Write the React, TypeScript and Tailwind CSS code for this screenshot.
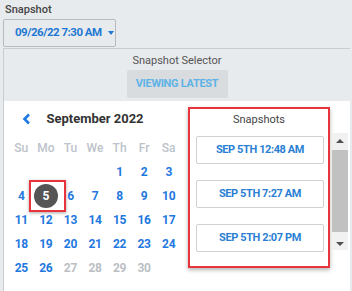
import { useState } from "react";

const weekdays = ["Su", "Mo", "Tu", "We", "Th", "Fr", "Sa"];
const snapshots = ["SEP 5TH 12:48 AM", "SEP 5TH 7:27 AM", "SEP 5TH 2:07 PM"];

// september 2022 starts on a thursday
const days: (number | null)[] = [null, null, null, null, ...Array.from({ length: 30 }, (_, i) => i + 1)];

export default function App() {
  const [selected, setSelected] = useState(5);

  return (
    <div className="w-[352px] h-[291px] bg-[#e8ebee] overflow-hidden font-['Roboto',sans-serif] text-[#333]">
      <div className="pl-[5px] pt-[3px] text-[11px] leading-[14px] font-medium text-[#444]">Snapshot</div>

      <button className="ml-[3px] mt-[2px] h-[28px] w-[113px] border border-[#b6bbc0] rounded-[2px] bg-[#e8ebee] flex items-center pl-[11px] gap-[6px] whitespace-nowrap text-[11.5px] tracking-[-0.5px] font-bold text-[#1f78d1]">
        <span>09/26/22 7:30 AM</span>
        <span className="w-0 h-0 border-l-[3.5px] border-r-[3.5px] border-t-[4px] border-l-transparent border-r-transparent border-t-[#1f78d1]" />
      </button>

      {/* POPUP */}
      <div className="ml-[3px] mr-[2px] mt-[1px] border-t border-l border-[#c9cdd1]">
        <div className="h-[52px] flex flex-col items-center pt-[5px]">
          <span className="text-[11px] leading-[14px] text-[#555]">Snapshot Selector</span>
          <div className="mt-[2px] h-[28px] w-[101px] bg-[#d8dcdf] rounded-[2px] flex items-center justify-center text-[11px] tracking-[-0.3px] font-bold text-[#5db3e6]">
            VIEWING LATEST
          </div>
        </div>

        <div className="bg-white h-[200px] flex items-start">
          {/* CALENDAR */}
          <div className="pl-[5px] pt-[9px] w-[177px]">
            <div className="relative h-[18px] flex items-center justify-center">
              <svg className="absolute left-[13px] top-[3px]" width="9" height="12" viewBox="0 0 9 12">
                <path d="M7 1.5 L2.5 6 L7 10.5" fill="none" stroke="#1f78e0" strokeWidth="2.6" />
              </svg>
              <span className="text-[13px] font-bold text-[#333]">September 2022</span>
            </div>
            <div className="mt-[8px] grid grid-cols-7 w-[172px]">
              {weekdays.map((d) => (
                <div key={d} className="h-[24px] flex items-center justify-center text-[12px] font-medium text-[#bcc3ca]">
                  {d}
                </div>
              ))}
              {days.map((d, idx) => (
                <div key={idx} className="relative h-[24px] flex items-center justify-center">
                  {d !== null && (
                    <button
                      onClick={() => setSelected(d)}
                      className={`w-[24px] h-[24px] rounded-full flex items-center justify-center text-[12px] tracking-[-0.3px] font-bold ${
                        d === selected ? "bg-[#555] text-white" : d > 26 ? "text-[#bbbfc4]" : "text-[#1f78e0]"
                      }`}
                    >
                      {d}
                    </button>
                  )}
                  {d === 5 && (
                    <div className="absolute left-[-5px] top-[-4px] w-[37px] h-[32px] border-2 border-[#e8343c] shadow-[0_1px_3px_rgba(0,0,0,0.35)]" />
                  )}
                </div>
              ))}
            </div>
          </div>

          {/* SNAPSHOT LIST */}
          <div className="ml-[7px] mt-[6px] w-[142px] h-[161px] border-2 border-[#e8343c] shadow-[0_2px_4px_rgba(0,0,0,0.3)] flex flex-col pt-[4px]">
            <div className="text-center text-[11px] leading-[14px] text-[#444]">Snapshots</div>
            <div className="mt-[9px] flex flex-col gap-[16px] pl-[6px]">
              {snapshots.map((s) => (
                <button
                  key={s}
                  className="w-[128px] h-[28px] bg-white border border-[#cfd2d5] rounded-[2px] text-[11px] tracking-[-0.4px] font-bold text-[#2a7fd4]"
                >
                  {s}
                </button>
              ))}
            </div>
          </div>

          {/* SCROLLBAR */}
          <div className="ml-[2px] mt-[32px] w-[16px] h-[117px] bg-[#f1f1f1] flex flex-col items-center">
            <div className="mt-[6px] w-0 h-0 border-l-[4px] border-r-[4px] border-b-[4px] border-l-transparent border-r-transparent border-b-[#505050]" />
            <div className="mt-[7px] w-full h-[82px] bg-[#c1c1c1]" />
            <div className="mt-[10px] w-0 h-0 border-l-[4px] border-r-[4px] border-t-[4px] border-l-transparent border-r-transparent border-t-[#505050]" />
          </div>
        </div>
      </div>
    </div>
  );
}
